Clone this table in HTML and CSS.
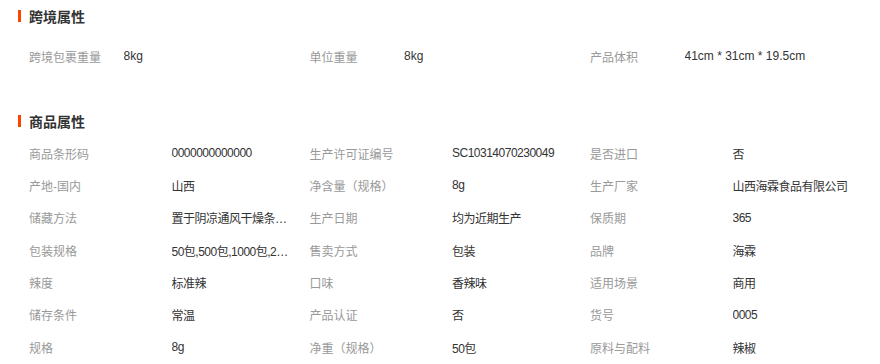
FILE: index.html
```html
<!DOCTYPE html>
<html lang="zh-CN">
<head>
<meta charset="utf-8">
<title>商品属性</title>
<link rel="stylesheet" href="styles.css">
</head>
<body>
  <section class="block block-cross">
    <h2 class="block-title"><span class="bar"></span>跨境属性</h2>
    <div class="grid grid-cross">
      <div class="cell"><span class="label">跨境包裹重量</span><span class="value">8kg</span></div>
      <div class="cell"><span class="label">单位重量</span><span class="value">8kg</span></div>
      <div class="cell"><span class="label">产品体积</span><span class="value">41cm * 31cm * 19.5cm</span></div>
    </div>
  </section>

  <section class="block block-goods">
    <h2 class="block-title"><span class="bar"></span>商品属性</h2>
    <div class="grid grid-goods">
      <div class="cell"><span class="label">商品条形码</span><span class="value">0000000000000</span></div>
      <div class="cell"><span class="label">生产许可证编号</span><span class="value">SC10314070230049</span></div>
      <div class="cell"><span class="label">是否进口</span><span class="value">否</span></div>

      <div class="cell"><span class="label">产地-国内</span><span class="value">山西</span></div>
      <div class="cell"><span class="label">净含量（规格）</span><span class="value">8g</span></div>
      <div class="cell"><span class="label">生产厂家</span><span class="value">山西海霖食品有限公司</span></div>

      <div class="cell"><span class="label">储藏方法</span><span class="value">置于阴凉通风干燥条件下保存</span></div>
      <div class="cell"><span class="label">生产日期</span><span class="value">均为近期生产</span></div>
      <div class="cell"><span class="label">保质期</span><span class="value">365</span></div>

      <div class="cell"><span class="label">包装规格</span><span class="value">50包,500包,1000包,2000包</span></div>
      <div class="cell"><span class="label">售卖方式</span><span class="value">包装</span></div>
      <div class="cell"><span class="label">品牌</span><span class="value">海霖</span></div>

      <div class="cell"><span class="label">辣度</span><span class="value">标准辣</span></div>
      <div class="cell"><span class="label">口味</span><span class="value">香辣味</span></div>
      <div class="cell"><span class="label">适用场景</span><span class="value">商用</span></div>

      <div class="cell"><span class="label">储存条件</span><span class="value">常温</span></div>
      <div class="cell"><span class="label">产品认证</span><span class="value">否</span></div>
      <div class="cell"><span class="label">货号</span><span class="value">0005</span></div>

      <div class="cell"><span class="label">规格</span><span class="value">8g</span></div>
      <div class="cell"><span class="label">净重（规格）</span><span class="value">50包</span></div>
      <div class="cell"><span class="label">原料与配料</span><span class="value">辣椒</span></div>
    </div>
  </section>
</body>
</html>
```

FILE: styles.css
```css
html, body {
  margin: 0;
  padding: 0;
  background: #ffffff;
}

body {
  font-family: "Liberation Sans", "Noto Sans CJK SC", sans-serif;
  font-size: 12px;
  color: #333333;
  padding-top: 4px;
}

.block-title {
  display: flex;
  align-items: center;
  gap: 8px;
  margin: 0;
  padding-left: 18px;
  height: 24px;
  font-size: 14px;
  font-weight: bold;
  color: #333333;
}

.bar {
  display: block;
  width: 3px;
  height: 12px;
  background: #ff4400;
}

.grid {
  display: grid;
  grid-template-columns: repeat(3, 280.5px);
  padding-left: 29px;
}

.cell {
  display: flex;
  align-items: center;
  white-space: nowrap;
}

.label {
  color: #999999;
  flex: none;
}

.value {
  color: #333333;
  overflow: hidden;
  text-overflow: ellipsis;
  white-space: nowrap;
}

.grid-cross {
  margin-top: 12px;
}

.grid-cross .cell {
  height: 32px;
}

.grid-cross .label {
  width: 94.5px;
}

.block-goods {
  margin-top: 37px;
}

.grid-goods {
  margin-top: 4px;
}

.grid-goods .cell {
  height: 32.33px;
}

.grid-goods .label {
  width: 142.5px;
}

.grid-goods .value {
  width: 119px;
  letter-spacing: -0.5px;
}
```
